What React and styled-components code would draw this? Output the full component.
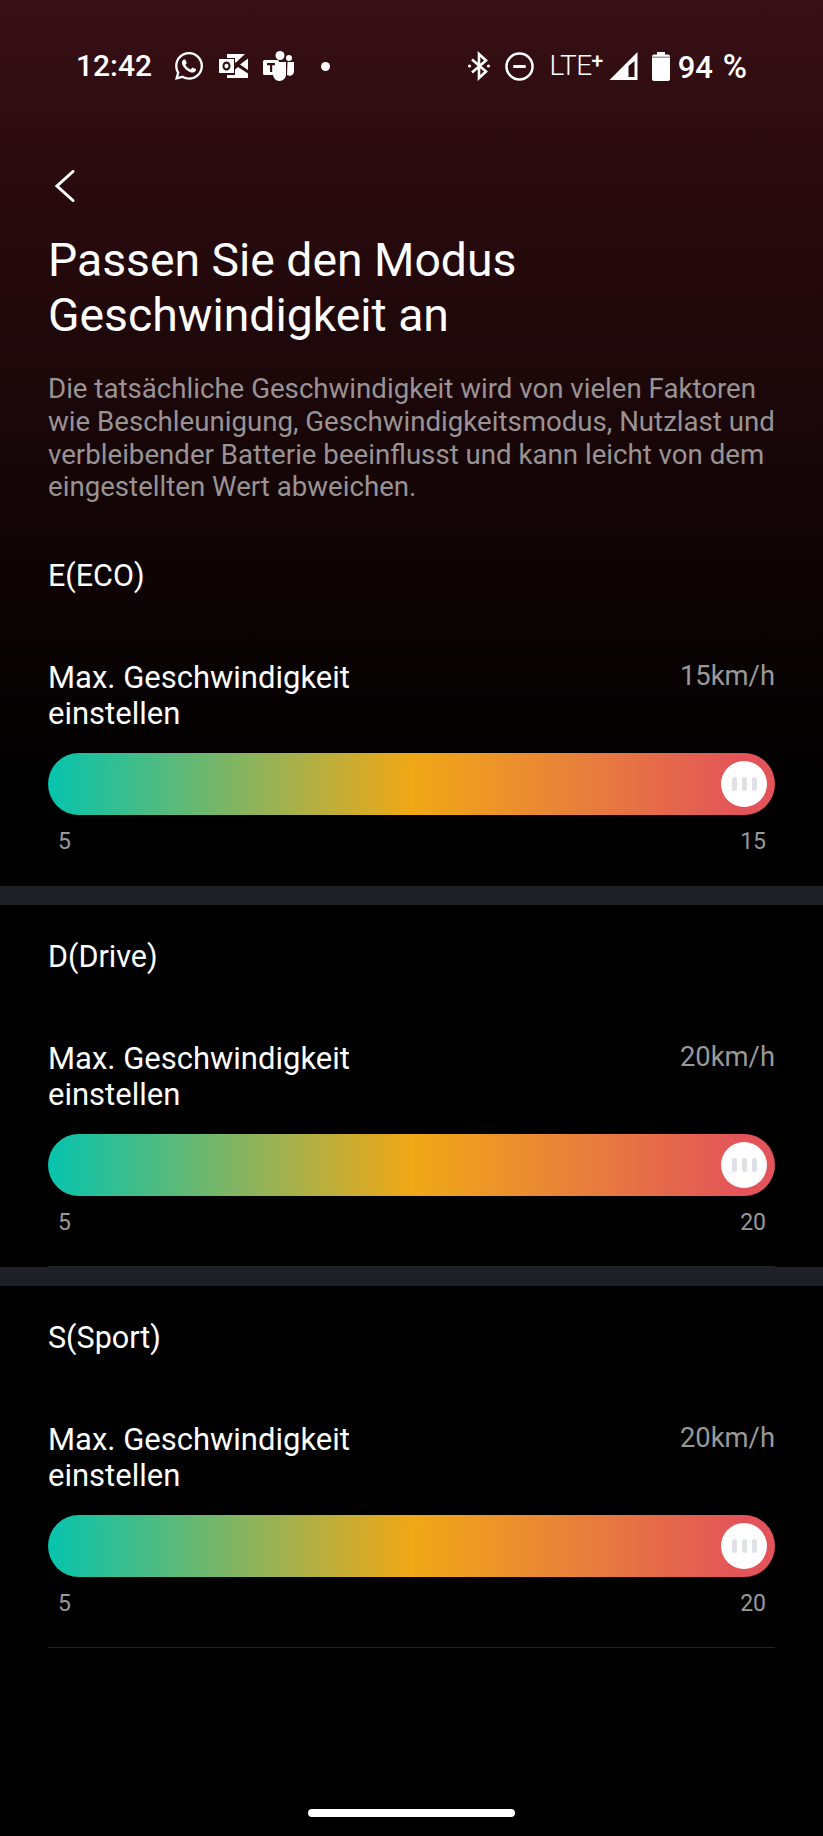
import React from "react";
import styled, { createGlobalStyle } from "styled-components";
import { FaWhatsapp } from "react-icons/fa";

const Global = createGlobalStyle`
  html, body { margin: 0; padding: 0; background: #000; }
  body { font-family: Roboto, "Liberation Sans", sans-serif; }
`;

const Page = styled.div`
  width: 823px;
  height: 1836px;
  overflow: hidden;
  position: relative;
  display: flex;
  flex-direction: column;
  background: linear-gradient(180deg, #370f14 0, #270a0d 220px, #000 790px);
  color: #fff;
`;

const StatusBar = styled.div`
  height: 132px;
  flex: none;
  box-sizing: border-box;
  padding: 0 76px 0 76px;
  display: flex;
  align-items: center;
  justify-content: space-between;
`;

const StatusGroup = styled.div`
  display: flex;
  align-items: center;
`;

const Time = styled.span`
  font-size: 30px;
  font-weight: 500;
  margin-right: 21px;
  line-height: 1;
`;

const NotifIcon = styled.span`
  display: flex;
  width: ${(p) => p.$w}px;
  margin-right: ${(p) => p.$gap}px;
  font-size: ${(p) => p.$w}px;
`;

const Dot = styled.span`
  width: 9px;
  height: 9px;
  margin-left: 2px;
  border-radius: 50%;
  background: #fff;
`;

const Lte = styled.span`
  font-size: 28px;
  font-weight: 300;
  line-height: 1;
  margin: 0 6px 0 15px;
  letter-spacing: -0.5px;
  sup { font-size: 21px; font-weight: 500; line-height: 0; vertical-align: 7px; }
`;

const Percent = styled.span`
  font-size: 31px;
  font-weight: 500;
  margin-left: 8px;
  line-height: 1;
  word-spacing: 2px;
  i { font-style: normal; font-size: 33px; }
`;

const Header = styled.header`
  padding: 0 48px;
  flex: none;
  height: 392px;
  box-sizing: border-box;
`;

const BackButton = styled.button`
  display: block;
  padding: 0;
  margin: 38px 0 0 7px;
  background: none;
  border: 0;
  height: 34px;
`;

const Title = styled.h1`
  margin: 29px 0 0;
  font-size: 46.3px;
  font-weight: 400;
  line-height: 55px;
`;

const Intro = styled.p`
  margin: 30px 0 0;
  font-size: 27.65px;
  line-height: 32.8px;
  color: #999394;
`;

const Section = styled.section`
  height: 362px;
  flex: none;
  box-sizing: border-box;
  margin: 0 48px;
  border-bottom: 1px solid ${(p) => (p.$rule ? "#232326" : "transparent")};
  display: flex;
  flex-direction: column;
`;

const SectionTitle = styled.h2`
  margin: 35px 0 0;
  font-size: 30.5px;
  font-weight: 400;
  line-height: 34px;
`;

const SpeedRow = styled.div`
  margin-top: 66.5px;
  display: flex;
  justify-content: space-between;
  align-items: flex-start;
`;

const SpeedLabel = styled.div`
  width: 340px;
  font-size: 31px;
  line-height: 36px;
`;

const SpeedValue = styled.div`
  font-size: 27.4px;
  line-height: 32px;
  color: #999;
`;

const Track = styled.div`
  margin-top: 21px;
  height: 62px;
  border-radius: 31px;
  box-sizing: border-box;
  padding-right: 8px;
  display: flex;
  align-items: center;
  justify-content: flex-end;
  background: linear-gradient(90deg, #06c4ae 0%, #9fb150 32%, #f0a816 50%, #e8823a 72%, #e2535a 96%);
`;

const Knob = styled.div`
  width: 46px;
  height: 46px;
  border-radius: 50%;
  background: #fff;
  display: flex;
  align-items: center;
  justify-content: center;
  gap: 5px;
`;

const Grip = styled.span`
  width: 5px;
  height: 14px;
  border-radius: 3px;
  background: #dfe1e6;
`;

const Ticks = styled.div`
  margin-top: 13px;
  padding: 0 9px 0 10px;
  display: flex;
  justify-content: space-between;
  font-size: 23px;
  line-height: 28px;
  color: #999;
`;

const Divider = styled.div`
  height: 19px;
  flex: none;
  background: #1f2025;
`;

const HomeBar = styled.div`
  position: absolute;
  left: 308px;
  bottom: 19px;
  width: 207px;
  height: 8px;
  border-radius: 4px;
  background: #fff;
`;

const modes = [
  { name: "E(ECO)", value: 15, rule: false },
  { name: "D(Drive)", value: 20, rule: true },
  { name: "S(Sport)", value: 20, rule: true },
];

const Outlook = () => (
  <svg width="29" height="28" viewBox="0 0 29 28">
    <path fillRule="evenodd" d="M0 7h15v14H0ZM7.500 9.500a4 4.500 0 1 0 .01 0ZM7.500 11.700a2 2.300 0 1 1-.01 0Z" fill="#fff" />
    <path d="M8 2h18l-9 8.500H16V6H8ZM29 6.500V18l-8-5.500ZM16 17.500l3-2.500 10 6.500V26H8v-3h8Z" fill="#fff" />
  </svg>
);

const Teams = () => (
  <svg width="31" height="30" viewBox="0 0 31 30">
    <circle cx="17" cy="4.500" r="4.500" fill="#fff" />
    <circle cx="26" cy="7" r="3" fill="#fff" />
    <path d="M12 11h11v12a6.500 6.500 0 0 1-13 1v-1h5V19h-3Z" fill="#fff" />
    <path d="M24.500 11H31v9a4.500 4.500 0 0 1-7 4Z" fill="#fff" />
    <path fillRule="evenodd" d="M1.500 9h13A1.500 1.500 0 0 1 16 10.500v12a1.500 1.500 0 0 1-1.500 1.500h-13A1.500 1.500 0 0 1 0 22.500v-12A1.500 1.500 0 0 1 1.500 9ZM4 12v2.200h3V21h2.200v-6.800h3V12Z" fill="#fff" />
  </svg>
);

const Bluetooth = () => (
  <svg width="24" height="30" viewBox="0 0 24 30" fill="none" stroke="#fff" strokeWidth="2.6">
    <path d="M5 8.500 19 20.500 12 27V3l7 6.500L5 21.500" />
    <circle cx="2.500" cy="15" r="1.600" fill="#fff" stroke="none" />
    <circle cx="21.500" cy="15" r="1.600" fill="#fff" stroke="none" />
  </svg>
);

const Dnd = () => (
  <svg width="29" height="29" viewBox="0 0 28 28" fill="none" stroke="#fff" strokeWidth="2.4" style={{ marginLeft: 14 }}>
    <circle cx="14" cy="14" r="12.600" />
    <path d="M8 14h12" strokeWidth="2.800" />
  </svg>
);

const Signal = () => (
  <svg width="29" height="28" viewBox="0 0 28 28">
    <path d="M28 0V28H0Z" fill="#fff" />
    <path d="M25 9V25H19V14Z" fill="#2e0d10" />
  </svg>
);

const Battery = () => (
  <svg width="18" height="29" viewBox="0 0 18 29" style={{ marginLeft: 14 }}>
    <path d="M5 0h8v2.500h3a2 2 0 0 1 2 2V27a2 2 0 0 1-2 2H2a2 2 0 0 1-2-2V4.500a2 2 0 0 1 2-2h3Z" fill="#fff" />
    <path d="M0 4.500h18v1.500H0Z" fill="#a89a9b" />
  </svg>
);

export default function App() {
  return (
    <Page>
      <Global />
      <StatusBar>
        <StatusGroup>
          <Time>12:42</Time>
          <NotifIcon $w={32} $gap={14}><FaWhatsapp /></NotifIcon>
          <NotifIcon $w={29} $gap={15}><Outlook /></NotifIcon>
          <NotifIcon $w={31} $gap={25}><Teams /></NotifIcon>
          <Dot />
        </StatusGroup>
        <StatusGroup>
          <Bluetooth />
          <Dnd />
          <Lte>LTE<sup>+</sup></Lte>
          <Signal />
          <Battery />
          <Percent>94 <i>%</i></Percent>
        </StatusGroup>
      </StatusBar>
      <Header>
        <BackButton aria-label="Zurück">
          <svg width="20" height="32" viewBox="0 0 20 32" fill="none" stroke="#fff" strokeWidth="3" strokeLinecap="round">
            <path d="M18 1.500 2 16l16 14.500" />
          </svg>
        </BackButton>
        <Title>Passen Sie den Modus<br />Geschwindigkeit an</Title>
        <Intro>
          Die tatsächliche Geschwindigkeit wird von vielen Faktoren wie Beschleunigung, Geschwindigkeitsmodus, Nutzlast und verbleibender Batterie beeinflusst und kann leicht von dem eingestellten Wert abweichen.
        </Intro>
      </Header>
      {modes.map((m, i) => (
        <React.Fragment key={m.name}>
          {i > 0 && <Divider />}
          <Section $rule={m.rule}>
            <SectionTitle>{m.name}</SectionTitle>
            <SpeedRow>
              <SpeedLabel>Max. Geschwindigkeit einstellen</SpeedLabel>
              <SpeedValue>{m.value}km/h</SpeedValue>
            </SpeedRow>
            <Track>
              <Knob><Grip /><Grip /><Grip /></Knob>
            </Track>
            <Ticks><span>5</span><span>{m.value}</span></Ticks>
          </Section>
        </React.Fragment>
      ))}
      <HomeBar />
    </Page>
  );
}
